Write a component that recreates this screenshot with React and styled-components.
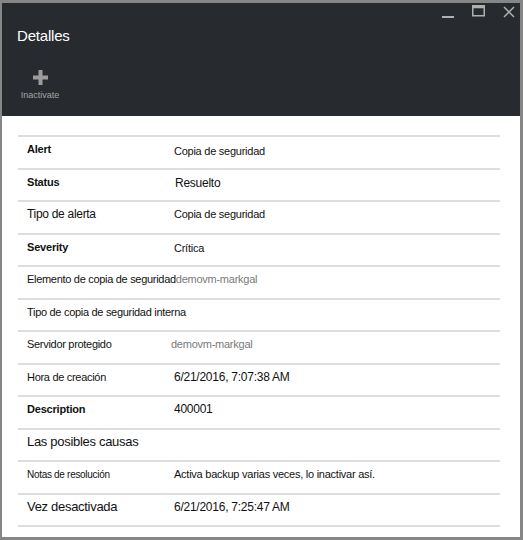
import React from "react";
import styled, { createGlobalStyle } from "styled-components";

const Global = createGlobalStyle`
  html, body { margin: 0; padding: 0; background: #fff; }
  body { font-family: "Liberation Sans", Arial, sans-serif; }
`;

const Window = styled.div`
  width: 523px;
  height: 540px;
  box-sizing: border-box;
  border: 3px solid #868686;
  border-left-width: 2px;
  border-right-width: 3px;
  display: flex;
  flex-direction: column;
  background: #fff;
`;

const Header = styled.div`
  background: #272b2f;
  height: 113px;
  flex-shrink: 0;
  position: relative;
  padding: 0 0 0 15px;
  display: flex;
  flex-direction: column;
`;

const Title = styled.div`
  color: #ffffff;
  font-size: 15px;
  margin-top: 24px;
  letter-spacing: -0.2px;
`;

const Command = styled.div`
  margin-top: 26px;
  width: 46px;
  display: flex;
  flex-direction: column;
  align-items: center;
  gap: 5px;
`;

const CommandLabel = styled.span`
  color: #a4a4a4;
  font-size: 9px;
`;

const Controls = styled.div`
  position: absolute;
  top: 2px;
  right: 5px;
  display: flex;
  gap: 18px;
  align-items: flex-start;
`;

const Body = styled.div`
  padding: 19px 20px 0 16px;
  display: flex;
  flex-direction: column;
`;

const Row = styled.div`
  height: 32.5px;
  box-sizing: border-box;
  border-top: 2px solid #dedede;
  display: flex;
  align-items: center;
  padding: 0 0 6px 9px;
  color: #111;
  &:last-child { border-bottom: 2px solid #dedede; height: 34.5px; }
`;

const Label = styled.span`
  width: ${(p) => (p.$auto ? "auto" : "147px")};
  flex-shrink: 0;
  white-space: nowrap;
  font-size: ${(p) => p.$size}px;
  font-weight: ${(p) => (p.$bold ? 700 : 400)};
  letter-spacing: ${(p) => (p.$bold ? "-0.2px" : "-0.3px")};
`;

const Value = styled.span`
  font-size: ${(p) => p.$size}px;
  color: ${(p) => p.$color || "#111"};
  margin-left: ${(p) => p.$shift || 0}px;
  margin-top: ${(p) => p.$down || 0}px;
  white-space: nowrap;
  letter-spacing: -0.25px;
`;

const rows = [
  { label: "Alert", ls: 11, bold: true, value: "Copia de seguridad", vs: 11, down: 3 },
  { label: "Status", ls: 11, bold: true, value: "Resuelto", vs: 12, shift: 1, down: 2 },
  { label: "Tipo de alerta", ls: 12, value: "Copia de seguridad", vs: 11 },
  { label: "Severity", ls: 11, bold: true, value: "Crítica", vs: 11, down: 3 },
  { label: "Elemento de copia de seguridad", ls: 11, auto: true, value: "demovm-markgal", vs: 11, color: "#7a7a7a" },
  { label: "Tipo de copia de seguridad interna", ls: 11, auto: true, value: "", vs: 11 },
  { label: "Servidor protegido", ls: 11, value: "demovm-markgal", vs: 11, color: "#7a7a7a", shift: -3 },
  { label: "Hora de creación", ls: 11, value: "6/21/2016, 7:07:38 AM", vs: 12 },
  { label: "Description", ls: 11, bold: true, value: "400001", vs: 12 },
  { label: "Las posibles causas", ls: 13, value: "", vs: 12 },
  { label: "Notas de resolución", ls: 10, value: "Activa backup varias veces, lo inactivar así.", vs: 11 },
  { label: "Vez desactivada", ls: 13, value: "6/21/2016, 7:25:47 AM", vs: 12 },
];

export default function App() {
  return (
    <>
      <Global />
      <Window>
        <Header>
          <Title>Detalles</Title>
          <Command>
            <svg width="15" height="15" viewBox="0 0 15 15">
              <rect x="5.5" y="0" width="4" height="15" fill="#9c9c9c" />
              <rect x="0" y="5.5" width="15" height="4" fill="#9c9c9c" />
            </svg>
            <CommandLabel>Inactivate</CommandLabel>
          </Command>
          <Controls>
            <svg width="12" height="14" viewBox="0 0 12 14">
              <rect x="0" y="11" width="12" height="2" fill="#b0b0b0" />
            </svg>
            <svg width="13" height="12" viewBox="0 0 13 12">
              <rect x="0.75" y="0.75" width="11.5" height="10" fill="none" stroke="#b0b0b0" strokeWidth="1.5" />
              <rect x="0.75" y="0.75" width="11.5" height="2.5" fill="#b0b0b0" />
            </svg>
            <svg width="12" height="12" viewBox="0 0 12 12" style={{ marginTop: 1 }}>
              <path d="M1 1 L11 11 M11 1 L1 11" stroke="#b0b0b0" strokeWidth="1.5" />
            </svg>
          </Controls>
        </Header>
        <Body>
          {rows.map((r) => (
            <Row key={r.label}>
              <Label $size={r.ls} $bold={r.bold} $auto={r.auto}>{r.label}</Label>
              {r.value && (
                <Value $size={r.vs} $color={r.color} $shift={r.shift} $down={r.down}>{r.value}</Value>
              )}
            </Row>
          ))}
        </Body>
      </Window>
    </>
  );
}
